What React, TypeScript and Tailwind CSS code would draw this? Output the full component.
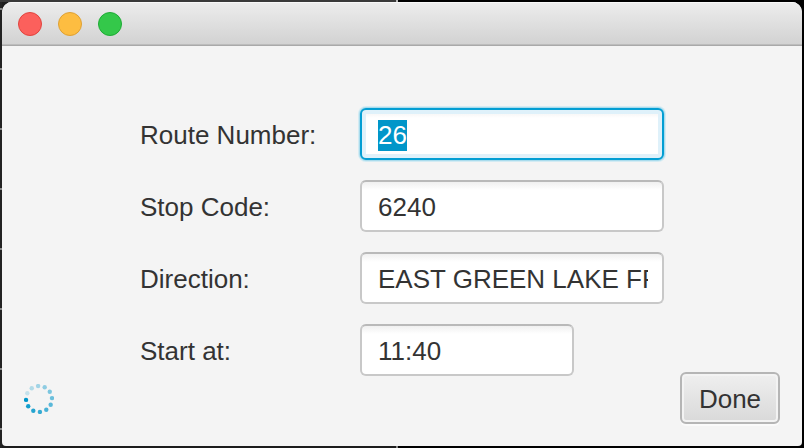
import { useEffect, useRef } from "react";

const FIELD =
  "h-[52px] rounded-md border-2 border-[#c8c8c8] border-t-[#b9b9b9] bg-white bg-linear-to-b from-[#f0f0f0] to-white to-[8px] pt-0.5 pl-4 pr-3.5 leading-8 outline-none selection:bg-[#0096c9] selection:text-white focus:border-[#039ed3] focus:shadow-[0_0_0_1px_#a9dbec,0_0_0_2px_#d3ebf3,inset_0_0_0_4px_#dff1fa]";

const FIELDS = [
  { id: "route", label: "Route Number:", value: "26", width: "w-full" },
  { id: "stop", label: "Stop Code:", value: "6240", width: "w-full" },
  { id: "direction", label: "Direction:", value: "EAST GREEN LAKE FREMONT", width: "w-full" },
  { id: "start", label: "Start at:", value: "11:40", width: "w-[214px]" },
];

const LIGHTS = [
  { name: "Close", color: "border-[#e0443e] bg-[#fc605c]" },
  { name: "Minimize", color: "border-[#dea034] bg-[#fdbd41]" },
  { name: "Zoom", color: "border-[#1eab35] bg-[#34c84a]" },
];

function Spinner() {
  const dots = Array.from({ length: 12 }, (_, i) => {
    const angle = ((176 - i * 30) * Math.PI) / 180;
    return { x: 15 + 13 * Math.cos(angle), y: 15 + 13 * Math.sin(angle), opacity: 1 - i * 0.073 };
  });
  return (
    <svg role="img" aria-label="Loading" className="size-[30px]" viewBox="0 0 30 30">
      {dots.map((d, i) => (
        <circle key={i} cx={d.x} cy={d.y} r={2.2} fill="#0096c9" opacity={d.opacity} />
      ))}
    </svg>
  );
}

export default function App() {
  const first = useRef<HTMLInputElement>(null);

  useEffect(() => {
    first.current?.focus();
    first.current?.select();
  }, []);

  return (
    <div className="flex min-h-screen flex-col bg-black bg-[linear-gradient(to_right,#3a3a3a_0,#3a3a3a_396px,#bbb_396px,#bbb_398px,#000_398px),repeating-linear-gradient(to_bottom,#222_0,#222_8px,#888_8px,#888_10px,#222_10px,#222_60px),linear-gradient(to_right,#1c1c1c_0,#1c1c1c_396px,#888_396px,#888_398px,#000_398px)] bg-size-[100%_2px,2px_100%,100%_100%] bg-no-repeat p-0.5 font-['Liberation_Sans',Arial,sans-serif] text-[26px] leading-8 text-[#333]">
      <main className="flex grow flex-col overflow-hidden rounded-t-[10px] rounded-b-[4px] bg-[#f4f4f4]">
        <header className="flex h-11 shrink-0 items-center gap-4 bg-linear-to-b from-[#ededed] to-[#d1d1d1] px-4 shadow-[inset_0_1px_0_#f8f8f8,inset_0_-1px_0_#a9a9a9,inset_0_-2px_0_#bcbcbc]">
          {LIGHTS.map((l) => (
            <button key={l.name} type="button" aria-label={l.name} className={`size-6 rounded-full border ${l.color}`} />
          ))}
        </header>
        <form className="flex grow items-end justify-between px-[22px] pt-[62px] pb-[22px]" onSubmit={(e) => e.preventDefault()}>
          <div className="flex h-[50px] w-[100px] items-center">
            <Spinner />
          </div>
          <div className="mb-12 grid w-[524px] grid-cols-[220px_1fr] items-center gap-y-5 self-start">
            {FIELDS.map((f, i) => (
              <div key={f.id} className="contents">
                <label htmlFor={f.id} className="pt-0.5 whitespace-nowrap">
                  {f.label}
                </label>
                <input ref={i === 0 ? first : undefined} id={f.id} type="text" defaultValue={f.value} className={`${FIELD} ${f.width}`} />
              </div>
            ))}
          </div>
          <button
            type="submit"
            className="h-[52px] w-[100px] rounded-md border-2 border-[#b5b5b5] bg-linear-to-b from-[#efefef] to-[#d9d9d9] pt-0.5 shadow-[inset_0_0_0_2px_#f3f3f3,0_2px_0_#fafafa]"
          >
            Done
          </button>
        </form>
      </main>
    </div>
  );
}
